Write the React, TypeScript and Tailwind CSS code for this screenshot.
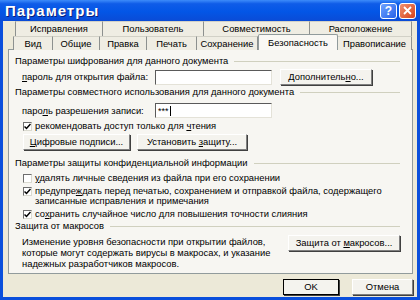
import React from 'react';

export default function App() {
  return (
    <div className="w-[420px] h-[300px] flex flex-col bg-[#0A4FDC] font-['Liberation_Sans',Arial,sans-serif] text-[9.4px] leading-[10px] text-black whitespace-nowrap select-none">
      {/* Title bar */}
      <div className="h-[21px] flex items-center justify-between pl-[5px] pr-[4px] bg-[linear-gradient(to_bottom,#3D8CFA_0%,#0F5CE8_18%,#0356E6_55%,#0A4BD6_100%)]">
        <span className="text-white font-bold text-[15px] tracking-[1px] [text-shadow:1px_1px_0_#0A1E7A]">Параметры</span>
        <div className="flex gap-[2px]">
          <div className="w-[17px] h-[16px] rounded-[3px] border border-white bg-[linear-gradient(135deg,#6FA3FF,#2560E8)] flex items-center justify-center text-white font-bold text-[12px] leading-none">?</div>
          <div className="w-[17px] h-[16px] rounded-[3px] border border-white bg-[linear-gradient(135deg,#F09070,#D6431A)] flex items-center justify-center">
            <svg width="9" height="9" viewBox="0 0 9 9">
              <path d="M1 1L8 8M8 1L1 8" stroke="white" strokeWidth="1.8" />
            </svg>
          </div>
        </div>
      </div>

      {/* Body */}
      <div className="flex-1 mx-[3px] mb-[3px] bg-[#ECE9D8] flex flex-col">
        {/* back row of tabs */}
        <div className="flex h-[15px] pl-[12px]">
          <Tab className="w-[88px] border-l" label="Исправления" />
          <Tab className="w-[101px]" label="Пользователь" />
          <Tab className="w-[106px]" label="Совместимость" />
          <Tab className="w-[102px]" label="Расположение" />
        </div>
        {/* front row of tabs */}
        <div className="flex items-start h-[14px] -mb-px pl-[10px] relative z-10">
          <Tab className="w-[40px] h-[13px] border-l" label="Вид" />
          <Tab className="w-[47px] h-[13px]" label="Общие" />
          <Tab className="w-[47px] h-[13px]" label="Правка" />
          <Tab className="w-[50px] h-[13px]" label="Печать" />
          <Tab className="w-[61px] h-[13px]" label="Сохранение" />
          <div className="w-[80px] h-[16px] -mt-[2px] bg-[#F9F8F4] border border-b-0 border-[#919B9C] rounded-t-[2px] flex items-center justify-center">
            Безопасность
          </div>
          <Tab className="w-[74px] h-[13px]" label="Правописание" />
        </div>

        {/* Tab panel */}
        <div className="ml-[5px] mr-[4px] h-[225px] border border-[#919B9C] bg-[#F7F6F2] pl-[6px] pr-[12px] flex flex-col">
          <Heading className="mt-[5px]">Параметры шифрования для данного документа</Heading>
          <div className="flex items-center mt-[2px] pl-[7px]">
            <span className="w-[133px]"><u>п</u>ароль для открытия файла:</span>
            <Field />
            <Button className="ml-[8px] w-[92px]">Дополнитель<u>н</u>о...</Button>
          </div>

          <Heading className="mt-[1px]">Параметры совместного использования для данного документа</Heading>
          <div className="flex items-center mt-[5px] pl-[7px]">
            <span className="w-[133px]">паро<u>л</u>ь разрешения записи:</span>
            <Field value="***" />
          </div>
          <Check className="mt-[3px]" checked>
            рекомендовать доступ только для <u>ч</u>тения
          </Check>
          <div className="flex gap-[7px] mt-[3px] pl-[8px]">
            <Button className="w-[107px]"><u>Ц</u>ифровые подписи...</Button>
            <Button className="w-[110px]">Установить <u>з</u>ащиту...</Button>
          </div>

          <Heading className="mt-[7px]">Параметры защиты конфиденциальной информации</Heading>
          <Check className="mt-[4px]">
            <u>у</u>далять личные сведения из файла при его сохранении
          </Check>
          <Check className="mt-[3px]" checked>
            предупре<u>ж</u>дать перед печатью, сохранением и отправкой файла, содержащего
            <br />
            записанные исправления и примечания
          </Check>
          <Check className="mt-[3px]" checked>
            со<u>х</u>ранить случайное число для повышения точности слияния
          </Check>

          <Heading className="mt-[1px]">Защита от макросов</Heading>
          <div className="flex items-start pl-[7px] mt-[3px]">
            <p className="w-[262px] leading-[11px] mt-px">
              Изменение уровня безопасности при открытии файлов,
              <br />
              которые могут содержать вирусы в макросах, и указание
              <br />
              надежных разработчиков макросов.
            </p>
            <Button className="ml-auto w-[112px]">Защита от <u>м</u>акросов...</Button>
          </div>
        </div>

        {/* Dialog buttons */}
        <div className="flex justify-end gap-[13px] pr-[4px] mt-[5px]">
          <Button className="w-[56px] outline outline-1 outline-black -outline-offset-1">OK</Button>
          <Button className="w-[61px]">Отмена</Button>
        </div>
      </div>
    </div>
  );
}

function Tab({ label, className = '' }: { label: string; className?: string }) {
  return (
    <div className={`h-full flex items-center justify-center border-r border-t border-r-[#8D918F] border-t-[#D2D1C7] border-l-[#8D918F] bg-[#EFEDE3] ${className}`}>
      {label}
    </div>
  );
}

function Heading({ children, className = '' }: { children: React.ReactNode; className?: string }) {
  return (
    <div className={`flex items-center h-[12px] ${className}`}>
      <span>{children}</span>
      <div className="flex-1 ml-[6px] h-0 border-t border-[#D0D0BF]" />
    </div>
  );
}

function Field({ value = '' }: { value?: string }) {
  return (
    <div className="w-[117px] h-[15px] bg-white border border-t-[#5A5A5A] border-l-[#5A5A5A] border-r-[#E4E2D8] border-b-[#E4E2D8] flex items-center pl-[2px] text-[9px]">
      {value}
      {value && <span className="w-px h-[10px] bg-black ml-px" />}
    </div>
  );
}

function Button({ children, className = '' }: { children: React.ReactNode; className?: string }) {
  return (
    <div className={`h-[16px] flex items-center justify-center bg-[#F4F3EE] border border-t-white border-l-white border-r-[#7F7F7F] border-b-[#7F7F7F] shadow-[1px_1px_0_#404040] ${className}`}>
      <span>{children}</span>
    </div>
  );
}

function Check({ children, checked = false, className = '' }: { children: React.ReactNode; checked?: boolean; className?: string }) {
  return (
    <div className={`flex items-start pl-[8px] ${className}`}>
      <span className="w-[9px] h-[9px] mt-[1px] shrink-0 bg-white border border-t-[#6E6E6E] border-l-[#6E6E6E] border-r-[#DADAD0] border-b-[#DADAD0] flex items-center justify-center">
        {checked && (
          <svg width="7" height="7" viewBox="0 0 7 7">
            <path d="M0.5 3.5L2.5 5.5L6.5 1" fill="none" stroke="black" strokeWidth="1.5" />
          </svg>
        )}
      </span>
      <span className="ml-[3px]">{children}</span>
    </div>
  );
}
